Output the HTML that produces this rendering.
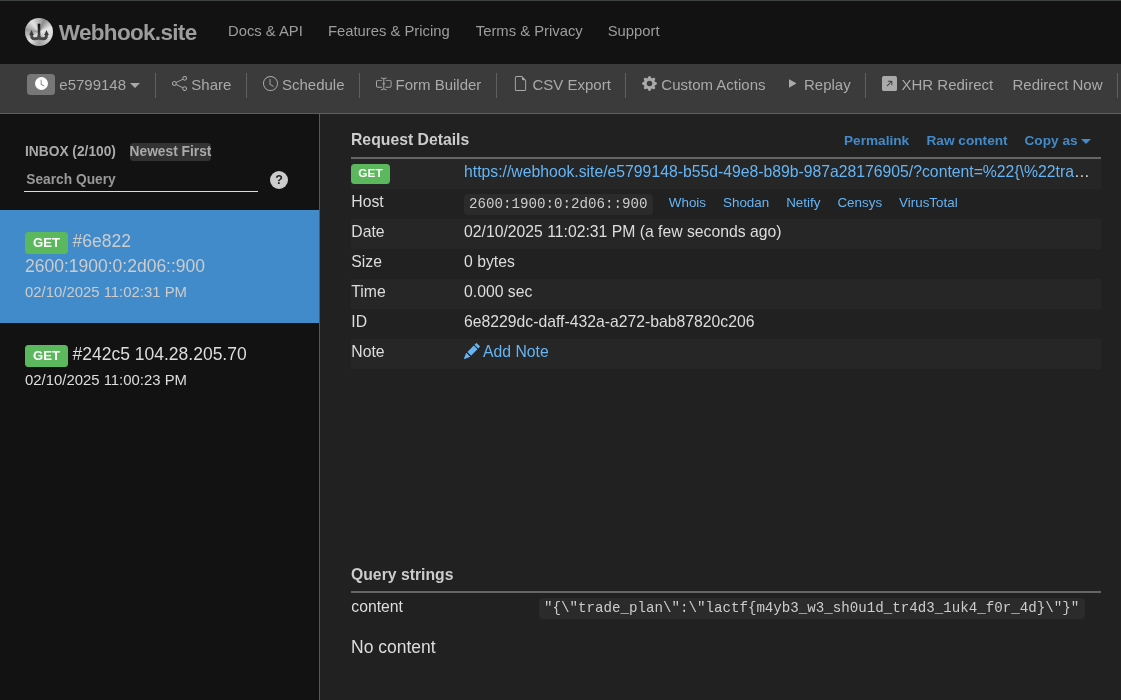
<!DOCTYPE html>
<html><head><meta charset="utf-8"><title>Webhook.site</title>
<style>
*{box-sizing:border-box}
html,body{margin:0;padding:0}
body{will-change:transform;width:1121px;height:700px;overflow:hidden;background:#212121;font-family:"Liberation Sans",Arial,sans-serif;font-size:16.25px;color:#ddd;position:relative}
a{color:#64b5f6;text-decoration:none}
.abs{position:absolute;white-space:nowrap}
#nav{position:absolute;left:0;top:0;width:1121px;height:64px;background:#121212;border-top:1px solid #3f4442}
#brand{position:absolute;left:58.8px;top:16.6px;font-size:22.5px;font-weight:bold;color:#9d9d9d;letter-spacing:-0.68px;line-height:30px;white-space:nowrap}
.navl{position:absolute;top:20px;font-size:14.8px;color:#9d9d9d;line-height:20px;white-space:nowrap}
#tool{position:absolute;left:0;top:64px;width:1121px;height:50px;background:#3b3b3b;border-bottom:1px solid #5e5e5e}
.ti{position:absolute;top:10px;height:22px;line-height:22px;font-size:15px;color:#aaa;white-space:nowrap}
.sep{position:absolute;top:9px;width:1px;height:25px;background:#606060}
.ic{position:absolute;fill:#aaa}
#side{position:absolute;left:0;top:114px;width:320px;height:586px;background:#121212;border-right:1px solid #585858}
#main{position:absolute;left:320px;top:114px;width:801px;height:586px;background:#212121}
.badge{position:absolute;background:#5cb85c;color:#fff;font-weight:bold;border-radius:3.5px;text-align:center;white-space:nowrap}
.row{position:absolute;left:351px;width:750px;height:30.1px}
.row.s{background:#262626}
.k{position:absolute;left:0.3px;top:0;line-height:26.5px;font-size:15.75px;color:#ddd}
.v{position:absolute;left:113px;top:0;line-height:26.5px;font-size:15.75px;color:#ddd;white-space:nowrap}
code{font-family:"Liberation Mono",monospace;font-size:14.16px;color:#ccc;background:#2b2b2b;border-radius:4px;padding:0 5.500px 0 5px;display:inline-block;line-height:21px;height:21px;vertical-align:middle;position:relative;top:2.200px}
.sm{font-size:13.4px}
.hl{position:absolute;top:132.200px;font-size:13.65px;font-weight:bold;color:#428bca;line-height:18px;white-space:nowrap}
.hr2{position:absolute;left:351px;width:750px;height:2px;background:#656565}
</style></head><body>
<div id="nav">
<div class="abs" style="left:24.900px;top:16.900px;width:28.200px;height:28.200px;border-radius:50%;background:conic-gradient(from 0deg,#b5b5b5 0deg,#8c8c8c 25deg,#e6e6e6 70deg,#d8d8d8 120deg,#a0a0a0 180deg,#e0e0e0 225deg,#9a9a9a 280deg,#e4e4e4 325deg,#b5b5b5 360deg)"></div>
<svg id="logo" class="abs" style="left:24px;top:16px" width="30" height="30" viewBox="0 0 30 30">

<defs><linearGradient id="sg" x1="0" y1="6" x2="0" y2="23" gradientUnits="userSpaceOnUse"><stop offset="0" stop-color="#0a0a0a"/><stop offset="0.6" stop-color="#3a3a3a"/><stop offset="1" stop-color="#555"/></linearGradient></defs>
<path d="M7.600 17 V18.700 C7.600 21 8.800 21.700 10.400 21.700 H12 C13.800 21.700 15 21.300 15 19.600 C15 21.300 16.200 21.700 18 21.700 H19.600 C21.200 21.700 22.400 21 22.400 18.700 V17" fill="none" stroke="#484848" stroke-width="2.900" stroke-linejoin="round"/>
<path d="M15 6.700 V21" fill="none" stroke="url(#sg)" stroke-width="2.600"/>
<path d="M7.500 13.100 L9.900 17.900 H5.100 Z M22.500 13.100 L24.900 17.900 H20.100 Z" fill="#3e3e3e"/>
</svg>
<div id="brand">Webhook.site</div>
<div class="navl" style="left:228px">Docs &amp; API</div>
<div class="navl" style="left:328px">Features &amp; Pricing</div>
<div class="navl" style="left:475.800px">Terms &amp; Privacy</div>
<div class="navl" style="left:607.700px">Support</div>
</div>
<div id="tool">
<div class="abs" style="left:27px;top:10px;width:28px;height:21px;border-radius:3.5px;background:#777"></div>
<svg class="abs" style="left:34.700px;top:13.100px" width="13" height="13" viewBox="0 0 16 16"><path fill="#fff" d="M16 8A8 8 0 1 1 0 8a8 8 0 0 1 16 0M8 3.500a.5.500 0 0 0-1 0V9a.5.500 0 0 0 .252.434l3.500 2a.5.500 0 0 0 .496-.868L8 8.710z"/></svg>
<div class="ti" style="left:59.300px">e5799148</div>
<div class="abs" style="left:130px;top:19px;width:0;height:0;border-left:5px solid transparent;border-right:5px solid transparent;border-top:5px solid #aaa"></div>
<div class="sep" style="left:155px"></div>
<svg class="ic" style="left:172px;top:12px" width="15" height="15" viewBox="0 0 16 16"><path d="M13.500 1a1.500 1.500 0 1 0 0 3 1.500 1.500 0 0 0 0-3M11 2.500a2.500 2.500 0 1 1 .603 1.628l-6.718 3.120a2.500 2.500 0 0 1 0 1.504l6.718 3.120a2.500 2.500 0 1 1-.488.876l-6.718-3.120a2.500 2.500 0 1 1 0-3.256l6.718-3.120A2.500 2.500 0 0 1 11 2.500m-8.500 4a1.500 1.500 0 1 0 0 3 1.500 1.500 0 0 0 0-3m11 5.500a1.500 1.500 0 1 0 0 3 1.500 1.500 0 0 0 0-3"/></svg>
<div class="ti" style="left:191.300px">Share</div>
<div class="sep" style="left:246px"></div>
<svg class="ic" style="left:263px;top:12px" width="15" height="15" viewBox="0 0 16 16"><path d="M8 3.500a.5.500 0 0 0-1 0V9a.5.500 0 0 0 .252.434l3.500 2a.5.500 0 0 0 .496-.868L8 8.710z"/><path d="M8 16A8 8 0 1 0 8 0a8 8 0 0 0 0 16m7-8A7 7 0 1 1 1 8a7 7 0 0 1 14 0"/></svg>
<div class="ti" style="left:282px">Schedule</div>
<div class="sep" style="left:359px"></div>
<svg class="ic" style="left:376.200px;top:12.300px" width="15.600" height="15.600" viewBox="0 0 16 16"><path d="M5 2a.5.500 0 0 1 .5-.5c.862 0 1.573.287 2.060.566.174.099.321.198.440.286.119-.088.266-.187.440-.286A4.170 4.170 0 0 1 10.500 1.500a.5.500 0 0 1 0 1c-.638 0-1.177.213-1.564.434a3.500 3.500 0 0 0-.436.294V7.500H9a.5.500 0 0 1 0 1h-.5v4.272c.100.080.248.187.436.294.387.221.926.434 1.564.434a.5.500 0 0 1 0 1 4.170 4.170 0 0 1-2.060-.566A5 5 0 0 1 8 13.650a5 5 0 0 1-.440.285 4.170 4.170 0 0 1-2.060.566.500.500 0 0 1 0-1c.638 0 1.177-.213 1.564-.434.188-.107.335-.214.436-.294V8.500H7a.5.500 0 0 1 0-1h.5V3.228a3.500 3.500 0 0 0-.436-.294A3.170 3.170 0 0 0 5.500 2.500.5.500 0 0 1 5 2"/><path d="M10 5h4a1 1 0 0 1 1 1v4a1 1 0 0 1-1 1h-4v1h4a2 2 0 0 0 2-2V6a2 2 0 0 0-2-2h-4zM6 5V4H2a2 2 0 0 0-2 2v4a2 2 0 0 0 2 2h4v-1H2a1 1 0 0 1-1-1V6a1 1 0 0 1 1-1z"/></svg>
<div class="ti" style="left:395.500px">Form Builder</div>
<div class="sep" style="left:496px"></div>
<svg class="ic" style="left:513px;top:12px" width="15" height="15" viewBox="0 0 16 16"><path d="M14 4.500V14a2 2 0 0 1-2 2H4a2 2 0 0 1-2-2V2a2 2 0 0 1 2-2h5.500zm-3 0A1.500 1.500 0 0 1 9.500 3V1H4a1 1 0 0 0-1 1v12a1 1 0 0 0 1 1h8a1 1 0 0 0 1-1V4.500z"/></svg>
<div class="ti" style="left:532.500px">CSV Export</div>
<div class="sep" style="left:625px"></div>
<svg class="ic" style="left:642px;top:12px" width="15" height="15" viewBox="0 0 16 16"><path d="M9.405 1.050c-.413-1.400-2.397-1.400-2.810 0l-.1.340a1.464 1.464 0 0 1-2.105.872l-.310-.170c-1.283-.698-2.686.705-1.987 1.987l.169.311c.446.820.023 1.841-.872 2.105l-.340.100c-1.400.413-1.400 2.397 0 2.810l.340.100a1.464 1.464 0 0 1 .872 2.105l-.170.310c-.698 1.283.705 2.686 1.987 1.987l.311-.169a1.464 1.464 0 0 1 2.105.872l.100.340c.413 1.400 2.397 1.400 2.810 0l.100-.340a1.464 1.464 0 0 1 2.105-.872l.310.170c1.283.698 2.686-.705 1.987-1.987l-.169-.311a1.464 1.464 0 0 1 .872-2.105l.340-.100c1.400-.413 1.400-2.397 0-2.810l-.340-.100a1.464 1.464 0 0 1-.872-2.105l.170-.310c.698-1.283-.705-2.686-1.987-1.987l-.311.169a1.464 1.464 0 0 1-2.105-.872zM8 10.930a2.929 2.929 0 1 1 0-5.860 2.929 2.929 0 0 1 0 5.858z"/></svg>
<div class="ti" style="left:661.300px">Custom Actions</div>
<svg class="ic" style="left:788.600px;top:15px" width="7.600" height="8.800" viewBox="0 0 8 9"><path d="M0 0 L8 4.500 L0 9 Z"/></svg>
<div class="ti" style="left:804px">Replay</div>
<div class="sep" style="left:865px"></div>
<svg class="ic" style="left:882px;top:12px" width="15" height="15" viewBox="0 0 16 16"><path d="M14 0a2 2 0 0 1 2 2v12a2 2 0 0 1-2 2H2a2 2 0 0 1-2-2V2a2 2 0 0 1 2-2zM5.904 10.803 10 6.707v2.768a.5.500 0 0 0 1 0V5.500a.5.500 0 0 0-.5-.5H6.525a.5.500 0 1 0 0 1h2.768l-4.096 4.096a.5.500 0 0 0 .707.707"/></svg>
<div class="ti" style="left:901.500px">XHR Redirect</div>
<div class="ti" style="left:1012.500px">Redirect Now</div>
<div class="sep" style="left:1117px"></div>
</div>
<div id="side"></div>
<div id="main"></div>

<!-- sidebar -->
<div class="abs" style="left:25px;top:143px;font-size:13.75px;font-weight:bold;color:#aaa;line-height:18px">INBOX (2/100)</div>
<div class="abs" style="left:129.500px;top:143px;width:81.500px;height:18px;background:#333;border-radius:3.500px"></div>
<div class="abs" style="left:129.600px;top:143px;font-size:13.75px;font-weight:bold;color:#aaa;line-height:18px">Newest First</div>
<div class="abs" style="left:26.300px;top:171px;font-size:13.75px;font-weight:bold;color:#999;line-height:18px">Search Query</div>
<div class="abs" style="left:24px;top:191px;width:234px;height:1px;background:#ddd"></div>
<div class="abs" style="left:270px;top:171px;width:18px;height:18px;border-radius:9px;background:#ccc;color:#222;font-weight:bold;font-size:12.5px;line-height:19px;text-align:center">?</div>

<div class="abs" style="left:0;top:210px;width:319px;height:113px;background:#428bca"></div>
<div class="badge" style="left:25px;top:232px;width:43px;height:21.500px;font-size:13.1px;line-height:21.500px">GET</div>
<div class="abs" style="left:72.500px;top:229px;font-size:17.5px;line-height:25px;color:#ccc">#6e822</div>
<div class="abs" style="left:25px;top:254px;font-size:17.5px;line-height:25px;color:#ccc">2600:1900:0:2d06::900</div>
<div class="abs" style="left:25px;top:280px;font-size:14.9px;line-height:25px;color:#ccc">02/10/2025 11:02:31 PM</div>

<div class="badge" style="left:25px;top:345px;width:43px;height:21.500px;font-size:13.1px;line-height:21.500px">GET</div>
<div class="abs" style="left:72.500px;top:342px;font-size:17.5px;line-height:25px;color:#ddd">#242c5 104.28.205.70</div>
<div class="abs" style="left:25px;top:368px;font-size:14.9px;line-height:25px;color:#ddd">02/10/2025 11:00:23 PM</div>

<!-- main -->
<div class="abs" style="left:351px;top:128.900px;font-size:15.75px;font-weight:bold;color:#ccc;line-height:22px">Request Details</div>
<a class="hl" style="left:844px">Permalink</a>
<a class="hl" style="left:926.500px">Raw content</a>
<a class="hl" style="left:1024.500px">Copy as</a>
<div class="abs" style="left:1080.900px;top:139.200px;width:0;height:0;border-left:5px solid transparent;border-right:5px solid transparent;border-top:5.500px solid #428bca"></div>
<div class="hr2" style="top:156.800px"></div>

<div class="row s" style="top:158.800px"><div class="badge" style="left:0;top:5.500px;width:39px;height:20px;font-size:11.8px;line-height:18.400px">GET</div><div class="v" style="width:626px;overflow:hidden;text-overflow:ellipsis"><a>https://webhook.site/e5799148-b55d-49e8-b89b-987a28176905/?content=%22{\%22trade_plan\%22:\%22lactf{m4yb3_w3_sh0u1d_tr4d3_1uk4_f0r_4d}\%22}%22</a></div></div>
<div class="row" style="top:188.900px"><div class="k">Host</div><div class="v"><code>2600:1900:0:2d06::900</code><a class="sm" style="margin-left:15.900px">Whois</a><a class="sm" style="margin-left:17px">Shodan</a><a class="sm" style="margin-left:17px">Netify</a><a class="sm" style="margin-left:17px">Censys</a><a class="sm" style="margin-left:17px">VirusTotal</a></div></div>
<div class="row s" style="top:219px"><div class="k">Date</div><div class="v">02/10/2025 11:02:31 PM (a few seconds ago)</div></div>
<div class="row" style="top:249.100px"><div class="k">Size</div><div class="v">0 bytes</div></div>
<div class="row s" style="top:279.200px"><div class="k">Time</div><div class="v">0.000 sec</div></div>
<div class="row" style="top:309.300px"><div class="k">ID</div><div class="v">6e8229dc-daff-432a-a272-bab87820c206</div></div>
<div class="row s" style="top:339.400px"><div class="k">Note</div><div class="v"><a><svg width="16" height="16" viewBox="0 0 16 16" style="vertical-align:-2px;margin-right:3px"><path fill="#64b5f6" d="M12.854.146a.5.500 0 0 0-.707 0L10.500 1.793 14.207 5.500l1.647-1.646a.5.500 0 0 0 0-.708zm.646 6.061L9.793 2.500 3.293 9H3.500a.5.500 0 0 1 .5.500v.5h.5a.5.500 0 0 1 .5.500v.5h.5a.5.500 0 0 1 .5.500v.5h.5a.5.500 0 0 1 .5.500v.207zm-7.468 7.468A.5.500 0 0 1 6 13.500V13h-.5a.5.500 0 0 1-.5-.5V12h-.5a.5.500 0 0 1-.5-.5V11h-.5a.5.500 0 0 1-.5-.5V10h-.5a.5.500 0 0 1-.175-.032l-.179.178a.5.500 0 0 0-.110.168l-2 5a.5.500 0 0 0 .650.650l5-2a.5.500 0 0 0 .168-.110z"/></svg>Add Note</a></div></div>

<div class="abs" style="left:351px;top:563.500px;font-size:15.75px;font-weight:bold;color:#ccc;line-height:22px">Query strings</div>
<div class="hr2" style="top:590.500px"></div>
<div class="row" style="top:592.500px"><div class="k" style="line-height:28.600px">content</div><div class="v" style="left:188px;line-height:30px"><code style="line-height:20.500px;height:20.500px;top:0.200px">"{\"trade_plan\":\"lactf{m4yb3_w3_sh0u1d_tr4d3_1uk4_f0r_4d}\"}"</code></div></div>
<div class="abs" style="left:351px;top:635.300px;font-size:17.5px;line-height:25px;color:#ddd">No content</div>
</body></html>
